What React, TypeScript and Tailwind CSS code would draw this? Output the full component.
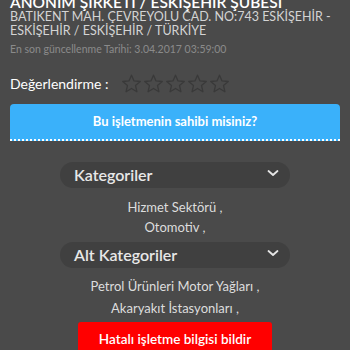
import React from 'react';

const Star = () => (
  <svg width="21" height="21" viewBox="0 0 24 24" fill="none" stroke="#393939" strokeWidth="1.5" strokeLinejoin="round">
    <path d="M12 2.5l2.9 6.6 7.1.6-5.4 4.7 1.6 7-6.2-3.7-6.2 3.7 1.6-7L2 9.7l7.1-.6z" />
  </svg>
);

const Chevron = () => (
  <svg width="12" height="8" viewBox="0 0 12 8" fill="none" stroke="#e5e5e5" strokeWidth="1.8" strokeLinecap="round" strokeLinejoin="round">
    <path d="M1.5 2l4.5 4 4.5-4" />
  </svg>
);

const categories = ['Hizmet Sektörü ,', 'Otomotiv ,'];
const subCategories = ['Petrol Ürünleri Motor Yağları ,', 'Akaryakıt İstasyonları ,'];

function Pill({ title }: { title: string }) {
  return (
    <div className="mx-auto w-[230px] h-[26px] rounded-full bg-[#404040] flex items-center justify-between pl-[14px] pr-[11px]">
      <span className="text-[16px] font-semibold text-[#e8e8e8]">{title}</span>
      <span className="-mt-[4px]"><Chevron /></span>
    </div>
  );
}

export default function App() {
  return (
    <div className="w-[350px] h-[350px] overflow-hidden bg-[#4a4a4a] font-['Lato',sans-serif]">
      <div className="px-[10px] -mt-[5px]">
        <h1 className="text-[15.5px] font-semibold text-white leading-[14px] whitespace-nowrap">ANONİM ŞİRKETİ / ESKİŞEHİR ŞUBESİ</h1>
        <p className="mt-[1px] text-[12.5px] leading-[14px] text-[#d4d4d4]">BATIKENT MAH. ÇEVREYOLU CAD. NO:743 ESKİŞEHİR{'\u00a0'}- ESKİŞEHİR / ESKİŞEHİR / TÜRKİYE</p>
        <p className="mt-[4px] text-[10.5px] leading-[14px] text-[#8a8a8a]">En son güncellenme Tarihi: 3.04.2017 03:59:00</p>
        <div className="mt-[16px] flex items-center h-[22px]">
          <span className="text-[14px] text-white">Değerlendirme :</span>
          <div className="ml-[13px] flex gap-[1px]">
            <Star /><Star /><Star /><Star /><Star />
          </div>
        </div>
        <button className="mt-[10px] w-full h-[37px] rounded-t-[4px] bg-[#3ab1fa] border-b-2 border-dotted border-white text-white text-[13px] font-bold">
          Bu işletmenin sahibi misiniz?
        </button>
      </div>
      <div className="mt-[21px]">
        <Pill title="Kategoriler" />
        <div className="mt-[11px] flex flex-col items-center gap-[4px] text-[13px] leading-[16px] text-[#dddddd]">
          {categories.map(c => <span key={c}>{c}</span>)}
        </div>
        <div className="mt-[7px]"><Pill title="Alt Kategoriler" /></div>
        <div className="mt-[10px] flex flex-col items-center gap-[6px] text-[13px] leading-[16px] text-[#dddddd]">
          {subCategories.map(c => <span key={c}>{c}</span>)}
        </div>
        <div className="mt-[6px] flex justify-center">
          <button className="w-[194px] h-[34px] rounded-[3px] bg-[#ff0000] text-white text-[13.5px] font-semibold">
            Hatalı işletme bilgisi bildir
          </button>
        </div>
      </div>
    </div>
  );
}
